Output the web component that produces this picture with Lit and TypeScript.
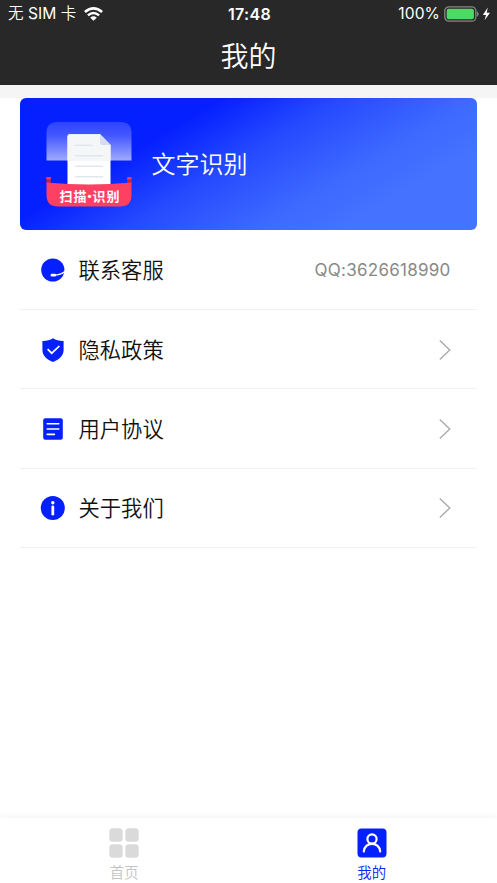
import { LitElement, html, svg, css } from "lit";
import { customElement } from "lit/decorators.js";

interface Row {
  label: string;
  icon: unknown;
  value?: string;
}

const BLUE = "#0520ff";

const supportIcon = svg`
  <circle cx="12.800" cy="13" r="11.600" fill=${BLUE}/>
  <path d="M13.500 18.200 C18.500 18.300 22 17 25.500 14" fill="none" stroke="#fff" stroke-width="1.200"/>
  <rect x="10.600" y="16.800" width="5.400" height="2.800" rx="1.300" fill="#fff"/>`;
const shieldIcon = svg`
  <path d="M13 1.300 C16 3.200 19.500 4 23.600 3.900 V13 C23.600 18.800 19 22.600 13 24.900 C7 22.600 2.400 18.800 2.400 13 V3.900 C6.500 4 10 3.200 13 1.300Z" fill=${BLUE}/>
  <path d="M7.600 12.200 L11.700 16.200 L19.400 9" fill="none" stroke="#fff" stroke-width="1.700"/>`;
const documentIcon = svg`
  <rect x="3.200" y="2.200" width="19.600" height="21.600" rx="2" fill=${BLUE}/>
  <path d="M7.200 7.700 H18.800 M7.200 13 H18.800 M7.200 18.400 H14.400" stroke="#fff" stroke-width="1.600" stroke-linecap="round"/>`;
const infoIcon = svg`
  <circle cx="12.800" cy="13" r="12" fill=${BLUE}/>
  <circle cx="12.800" cy="7.700" r="1.700" fill="#fff"/>
  <path d="M12.800 11.800 V19.200" stroke="#fff" stroke-width="2.800" stroke-linecap="round"/>`;

const ROWS: Row[] = [
  { label: "联系客服", icon: supportIcon, value: "QQ:3626618990" },
  { label: "隐私政策", icon: shieldIcon },
  { label: "用户协议", icon: documentIcon },
  { label: "关于我们", icon: infoIcon },
];

@customElement("app-root")
export class AppRoot extends LitElement {
  static styles = css`
    :host {
      display: flex;
      flex-direction: column;
      height: 883px;
      overflow: hidden;
      background: #fff;
      color: #111;
      font-family: Inter, "Noto Sans CJK SC", sans-serif;
      font-weight: 350;
    }
    svg { display: block; flex: none; }
    .top { background: #282828; color: #fff; height: 85px; flex: none; }
    .status {
      height: 28px;
      display: grid;
      grid-template-columns: 1fr auto 1fr;
      align-items: center;
      font-size: 16px;
      font-weight: 400;
      line-height: 28px;
    }
    .carrier { display: flex; align-items: center; gap: 8px; padding-left: 8px; font-size: 15.6px; }
    .cjk { font-weight: 350; }
    .time { font-weight: 600; letter-spacing: 0.35px; padding-left: 2px; }
    .power { display: flex; align-items: center; justify-content: flex-end; gap: 4px; padding-right: 6px; }
    .percent { font-size: 15.6px; letter-spacing: 0.1px; }
    .title {
      margin: 0;
      font-size: 28px;
      font-weight: 350;
      line-height: 58px;
      text-align: center;
    }
    .band { height: 13px; flex: none; background: #f5f5f5; }
    .main { flex: 1; padding: 0 20px; }
    .card {
      height: 132px;
      border-radius: 6px;
      background: linear-gradient(149deg, #0520ff 30%, #2449ff 47%, #3e69ff 67%, #4572ff 80%);
      display: flex;
      align-items: center;
      gap: 19.5px;
      padding-left: 26px;
      box-sizing: border-box;
      color: #fff;
      font-size: 24px;
      line-height: 32px;
    }
    .name { padding-top: 2px; }
    .rows { padding-top: 0.6px; }
    .row {
      height: 79.4px;
      box-sizing: border-box;
      border-bottom: 1px solid #f0f0f0;
      display: flex;
      align-items: center;
      padding: 1px 26px 0 20px;
    }
    .label { margin-left: 12.5px; flex: 1; font-size: 21.3px; line-height: 30px; }
    .value { color: #888; font-size: 17px; font-weight: 400; letter-spacing: 0.25px; margin-right: 0.5px; }
    .tabs {
      height: 65px;
      flex: none;
      display: grid;
      grid-template-columns: 1fr 1fr;
      background: #fff;
      box-shadow: 0 -1px 7px rgba(0, 0, 0, 0.05);
    }
    .tab {
      display: flex;
      flex-direction: column;
      align-items: center;
      padding-top: 10px;
      gap: 5px;
      font-size: 14.4px;
      line-height: 20px;
      color: #c4c4c4;
    }
    .active { color: #0520ff; padding-right: 2px; }
    .ribbon { font: 700 13px "Noto Sans CJK SC", sans-serif; }
  `;

  private logo() {
    return html`<svg width="86" height="86" viewBox="0 0 86 86">
      <defs>
        <linearGradient id="glass" x1="0" y1="0" x2="0" y2="1">
          <stop offset="0" stop-color="#fff" stop-opacity=".16"/>
          <stop offset=".35" stop-color="#fff" stop-opacity=".25"/>
          <stop offset="1" stop-color="#fff" stop-opacity=".62"/>
        </linearGradient>
      </defs>
      <path d="M.5 39.500 V12 Q.5 1 11.500 1 H74.500 Q85.500 1 85.500 12 V39.500Z" fill="url(#glass)"/>
      <path d="M21.500 64 V15.500 Q21.500 13.300 23.700 13.300 H54 L64.500 24 V64Z" fill="#fff"/>
      <path d="M21.500 40 V15.500 Q21.500 13.300 23.700 13.300 H54 L64.500 24 V40Z" fill="#f5f6f8"/>
      <path d="M54 13.300 L64.500 24 H56 Q54 24 54 22Z" fill="#d6deee"/>
      <path d="M29.500 24.200 H46 M29.500 34.800 H56.500 M29.500 45.200 H56.500 M29.500 55.800 H56.500" stroke="#e2e7ef" stroke-width="1.500" stroke-linecap="round"/>
      <path d="M.5 56 H4.800 V63 H.5Z M81.200 56 H85.500 V63 H81.200Z" fill="#c22545"/>
      <path d="M.5 56 H4.800 V58.500 H.5Z M81.200 56 H85.500 V58.500 H81.200Z" fill="#f2375d"/>
      <path d="M.5 61.500 Q43 65.500 85.500 61.500 V74 Q85.500 85.500 74 85.500 H12 Q.5 85.500 .5 74Z" fill="#ff4063"/>
      <text class="ribbon" x="13.500 27.500 37 46.500 60.500" y="79.800" fill="#fff">扫描·识别</text>
    </svg>`;
  }

  private row(item: Row) {
    return html`<div class="row">
      <svg width="26" height="26" viewBox="0 0 26 26">${item.icon}</svg>
      <span class="label">${item.label}</span>
      ${item.value
        ? html`<span class="value">${item.value}</span>`
        : html`<svg width="13" height="22" viewBox="0 0 13 22">
            <path d="M1.800 1.500 L11.800 11 L1.800 20.500" fill="none" stroke="#aaa" stroke-width="1.400"/>
          </svg>`}
    </div>`;
  }

  render() {
    return html`
      <header class="top">
        <div class="status">
          <div class="carrier">
            <span><span class="cjk">无</span> SIM <span class="cjk">卡</span></span>
            <svg width="19" height="14" viewBox="0 0 19 14">
              <path d="M.9 5 Q9.500 -2.200 18.100 5" fill="none" stroke="#fff" stroke-width="2.700"/>
              <path d="M3.900 8.400 Q9.500 3.700 15.100 8.400" fill="none" stroke="#fff" stroke-width="2.500"/>
              <path d="M6.200 10.700 Q9.500 7.900 12.800 10.700 L9.500 13.800Z" fill="#fff"/>
            </svg>
          </div>
          <span class="time">17:48</span>
          <div class="power">
            <span class="percent">100%</span>
            <svg width="47" height="16" viewBox="0 0 47 16">
              <rect x=".8" y=".8" width="31" height="14.400" rx="4" fill="none" stroke="#858585" stroke-width="1.300"/>
              <rect x="2.700" y="2.700" width="27.200" height="10.600" rx="2" fill="#4cd964"/>
              <path d="M33.300 5.700 Q35.200 8 33.300 10.300Z" fill="#858585" stroke="#858585"/>
              <path d="M43.800 1.600 L38.800 8.900 H42 L40.600 14.200 L46 6.800 H42.700Z" fill="#fff"/>
            </svg>
          </div>
        </div>
        <h1 class="title">我的</h1>
      </header>
      <div class="band"></div>
      <main class="main">
        <section class="card">${this.logo()}<span class="name">文字识别</span></section>
        <div class="rows">${ROWS.map((item) => this.row(item))}</div>
      </main>
      <nav class="tabs">
        <div class="tab">
          <svg width="30" height="30" viewBox="0 0 30 30" fill="#dadada">
            <rect x=".3" y=".3" width="13.400" height="13.400" rx="3.500"/>
            <rect x="16.300" y=".3" width="13.400" height="13.400" rx="3.500"/>
            <rect x=".3" y="16.300" width="13.400" height="13.400" rx="3.500"/>
            <rect x="16.300" y="16.300" width="13.400" height="13.400" rx="3.500"/>
          </svg>
          <span>首页</span>
        </div>
        <div class="tab active">
          <svg width="30" height="30" viewBox="0 0 30 30">
            <rect x=".5" y=".5" width="29" height="29" rx="4" fill=${BLUE}/>
            <circle cx="15" cy="11" r="4.600" fill="none" stroke="#fff" stroke-width="2.200"/>
            <path d="M6.800 23.500 C7.500 18.500 10.500 15.900 15 15.900 C19.500 15.900 22.500 18.500 23.200 23.500" fill="none" stroke="#fff" stroke-width="2.200" stroke-linecap="round"/>
          </svg>
          <span>我的</span>
        </div>
      </nav>
    `;
  }
}
